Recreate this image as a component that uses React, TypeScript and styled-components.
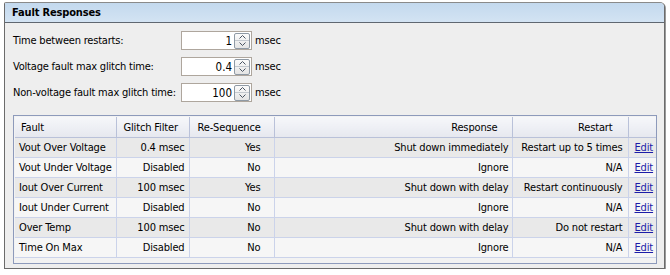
import styled, { createGlobalStyle } from "styled-components";

const GlobalStyle = createGlobalStyle`
  body {
    margin: 0;
    background: #ffffff;
    font-family: "DejaVu Sans Condensed", "DejaVu Sans", "Liberation Sans", sans-serif;
    font-stretch: condensed;
    font-size: 11px;
    letter-spacing: -0.15px;
    color: #000;
  }
`;

const Panel = styled.div`
  margin: 2px 0 0 4px;
  width: 659px;
  height: 265px;
  border: 1px solid #6b6b6b;
  border-top-color: #8a8a8a;
  border-radius: 2px 5px 0 0;
  box-shadow: 1px 1px 0 #9a9a9a;
  background: #eeeeee;
  display: flex;
  flex-direction: column;
  overflow: hidden;
`;

const PanelHeader = styled.div`
  height: 19px;
  flex: none;
  background: linear-gradient(#c3d9ee, #d3e3f3);
  border-bottom: 1px solid #5f6771;
  display: flex;
  align-items: center;
  padding-left: 7px;
  font-weight: bold;
  font-size: 11px;
`;

const PanelBody = styled.div`
  padding: 8px 7px 0 8px;
  display: flex;
  flex-direction: column;
`;

const Form = styled.div`
  display: grid;
  grid-template-columns: 168px 71px auto;
  row-gap: 7px;
  align-items: center;
`;

const Label = styled.span`
  white-space: nowrap;
  letter-spacing: -0.2px;
`;

const Spin = styled.div`
  height: 17px;
  border: 1px solid #aea69d;
  background: #fff;
  display: flex;
  align-items: center;
  justify-content: flex-end;
  padding-right: 1px;
  gap: 2px;
`;

const SpinValue = styled.span`
  font-size: 11.5px;
  letter-spacing: 0;
`;

const SpinButtons = styled.div`
  width: 14px;
  height: 14px;
  border: 1px solid #8f9aa5;
  border-radius: 2px;
  background: linear-gradient(#fbfbfb, #e4e4e4);
  display: flex;
  flex-direction: column;
`;

const SpinHalf = styled.div<{ $top?: boolean }>`
  flex: 1;
  display: flex;
  align-items: center;
  justify-content: center;
  border-bottom: ${(p) => (p.$top ? "1px solid #c4c9cf" : "none")};
`;

const Unit = styled.span`
  padding-left: 3px;
`;

const TableFrame = styled.div`
  margin-top: 13px;
  height: 145px;
  border: 1px solid #8d9abb;
  padding: 1px;
  background: #f2f2f2;
`;

const Table = styled.table`
  border-collapse: collapse;
  width: 641px;
  table-layout: fixed;
`;

const Th = styled.th<{ $align?: string; $pad: string }>`
  height: 20px;
  padding: ${(p) => p.$pad};
  text-align: ${(p) => p.$align || "left"};
  font-weight: normal;
  background: linear-gradient(#f6f7fa, #e6e8ef);
  border: 1px solid #b9c1d9;
  border-top: none;
  white-space: nowrap;
  &:first-child {
    border-left: none;
  }
  &:last-child {
    border-right: none;
  }
`;

const Tr = styled.tr<{ $odd: boolean }>`
  background: ${(p) => (p.$odd ? "#e9e9e9" : "#f6f6f6")};
`;

const Td = styled.td<{ $align?: string; $pad: string }>`
  height: 19px;
  padding: ${(p) => p.$pad};
  text-align: ${(p) => p.$align || "right"};
  border: 1px solid #cbd3ea;
  white-space: nowrap;
  overflow: hidden;
  &:first-child {
    border-left: none;
  }
  &:last-child {
    border-right: none;
  }
`;

const EditLink = styled.a`
  color: #1c1ca8;
  text-decoration: underline;
  cursor: pointer;
`;

function Arrow({ up }: { up?: boolean }) {
  return (
    <svg width="7" height="4" viewBox="0 0 7 4">
      <path
        d={up ? "M0.5 3.5 L3.5 0.5 L6.5 3.5" : "M0.5 0.5 L3.5 3.5 L6.5 0.5"}
        fill="none"
        stroke="#4a5563"
        strokeWidth="1"
      />
    </svg>
  );
}

const settings = [
  { label: "Time between restarts:", value: "1" },
  { label: "Voltage fault max glitch time:", value: "0.4" },
  { label: "Non-voltage fault max glitch time:", value: "100" },
];

const columns = [
  { title: "Fault", width: 101, align: "left", pad: "0 6px" },
  { title: "Glitch Filter", width: 73, align: "left", pad: "0 7px" },
  { title: "Re-Sequence", width: 85, align: "left", pad: "0 8px" },
  { title: "Response", width: 238, align: "right", pad: "0 14px 0 4px" },
  { title: "Restart", width: 116, align: "right", pad: "0 15px 0 4px" },
  { title: "", width: 28, align: "left", pad: "0" },
];

const faults = [
  ["Vout Over Voltage", "0.4 msec", "Yes", "Shut down immediately", "Restart up to 5 times"],
  ["Vout Under Voltage", "Disabled", "No", "Ignore", "N/A"],
  ["Iout Over Current", "100 msec", "Yes", "Shut down with delay", "Restart continuously"],
  ["Iout Under Current", "Disabled", "No", "Ignore", "N/A"],
  ["Over Temp", "100 msec", "No", "Shut down with delay", "Do not restart"],
  ["Time On Max", "Disabled", "No", "Ignore", "N/A"],
];

const cellPads = ["0 4px", "0 4px", "0 13px 0 4px", "0 3px", "0 5px 0 3px"];

export default function App() {
  return (
    <>
      <GlobalStyle />
      <Panel>
        <PanelHeader>Fault Responses</PanelHeader>
        <PanelBody>
          <Form>
            {settings.map((s) => (
              <>
                <Label key={s.label}>{s.label}</Label>
                <Spin>
                  <SpinValue>{s.value}</SpinValue>
                  <SpinButtons>
                    <SpinHalf $top>
                      <Arrow up />
                    </SpinHalf>
                    <SpinHalf>
                      <Arrow />
                    </SpinHalf>
                  </SpinButtons>
                </Spin>
                <Unit>msec</Unit>
              </>
            ))}
          </Form>
          <TableFrame>
            <Table>
              <colgroup>
                {columns.map((c, i) => (
                  <col key={i} style={{ width: c.width }} />
                ))}
              </colgroup>
              <thead>
                <tr>
                  {columns.map((c, i) => (
                    <Th key={i} $align={c.align} $pad={c.pad}>
                      {c.title}
                    </Th>
                  ))}
                </tr>
              </thead>
              <tbody>
                {faults.map((row, r) => (
                  <Tr key={r} $odd={r % 2 === 0}>
                    {row.map((cell, i) => (
                      <Td key={i} $align={i === 0 ? "left" : "right"} $pad={cellPads[i]}>
                        {cell}
                      </Td>
                    ))}
                    <Td $align="left" $pad="0 6px">
                      <EditLink>Edit</EditLink>
                    </Td>
                  </Tr>
                ))}
              </tbody>
            </Table>
          </TableFrame>
        </PanelBody>
      </Panel>
    </>
  );
}
